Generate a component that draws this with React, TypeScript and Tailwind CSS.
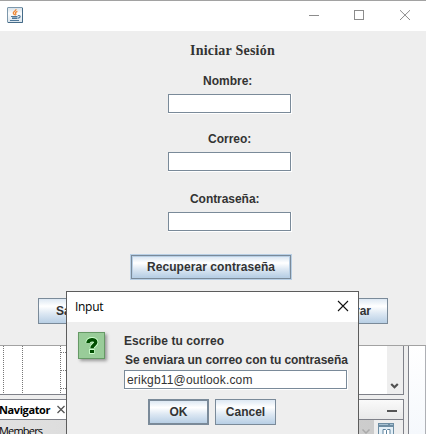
import React from 'react';

const face = "bg-[linear-gradient(to_bottom,#dde8f3_0%,#ffffff_30%,#dde8f3_60%,#b8cfe5_100%)]";
const metal = "font-['Liberation_Sans',Arial,sans-serif] text-[12px] leading-[14px] font-bold text-[#333333] whitespace-nowrap";

function Field({ className = '', children }: { className?: string; children?: React.ReactNode }) {
  return (
    <div className={`border-r border-b border-white ${className}`}>
      <div className="h-full border border-[#7a8a99] bg-white">{children}</div>
    </div>
  );
}

function JavaIcon() {
  return (
    <svg width="16" height="16" viewBox="0 0 16 16" className="ml-[7px] mt-[6px]">
      <defs>
        <linearGradient id="jbg" x1="0" y1="0" x2="0" y2="1">
          <stop offset="0" stopColor="#d5e0e8" />
          <stop offset="0.4" stopColor="#fbfcfd" />
          <stop offset="1" stopColor="#d9e4ec" />
        </linearGradient>
      </defs>
      <rect x="0.5" y="0.5" width="15" height="15" rx="0.5" fill="url(#jbg)" stroke="#7d98ac" />
      <path d="M1 15.5H15.5V1" fill="none" stroke="#456b88" />
      <path d="M9 2.2C9.4 4 6 4.6 6.3 6.2C6.5 7.2 7.4 7.4 7.6 8.2M10.4 4.3C8.4 5.1 8 6 8.8 6.8C9.2 7.4 8.8 7.8 8.3 8.3" fill="none" stroke="#ee8836" strokeWidth="1.3" />
      <path d="M4 9.5H10.5M5 11.5H10.5M3 13.5H12" fill="none" stroke="#4f7899" strokeWidth="1" />
      <path d="M5 10.5H10.5" fill="none" stroke="#8aa7bd" strokeWidth="1" />
      <path d="M10.8 8.7C14 7.9 13.9 10.6 11 11.1" fill="none" stroke="#4f7899" strokeWidth="1.1" />
    </svg>
  );
}

function Workspace() {
  return (
    <div className="h-[88px] flex bg-[#eeeeee] overflow-hidden">
      <div className="w-[404px] flex flex-col">
        <div className="h-[49px] flex border-r border-b border-[#7f8189] bg-white">
          <svg width="387" height="48" viewBox="0 0 387 48" shapeRendering="crispEdges">
            <path d="M3.5 0V48M22.5 0V48M60.5 0V48M61 6.5H75M61 24.5H75M61 42.5H75" stroke="#777" strokeDasharray="1 1" />
          </svg>
          <div className="w-4 bg-[#eeeeee] flex flex-col justify-end">
            <svg width="16" height="16" viewBox="0 0 16 16"><path d="M4.2 6L7.5 9.3L10.8 6" fill="none" stroke="#505050" strokeWidth="2.2" /></svg>
          </div>
        </div>
        <div className="mt-1 h-[21px] flex justify-between border-t border-r border-b border-[#7f8189] bg-linear-to-b from-[#fafafa] to-[#e9e9e9]">
          <div className="w-[75px] flex bg-white">
            <span className="w-[50px] font-['Open_Sans','Noto_Sans',sans-serif] text-[11px] leading-[20px] font-bold text-black tracking-[-0.4px] ml-[-1px] whitespace-nowrap">Navigator</span>
            <svg width="10" height="10" viewBox="0 0 10 10" className="ml-[7px] mt-[5px]"><path d="M1.5 1L8.5 8M8.5 1L1.5 8" stroke="#555" strokeWidth="1.3" /></svg>
          </div>
          <div className="mt-[10px] mr-[6px] h-[2px] w-[10px] bg-[#555]" />
        </div>
        <div className="h-[14px] flex border-r border-[#7f8189] bg-[#eeeeee]">
          <div className="w-[374px] bg-linear-to-r from-[#e1e1e1] to-[#cccccc] flex justify-between">
            <span className="ml-[-1px] font-['Open_Sans','Noto_Sans',sans-serif] text-[11px] leading-[22px] text-black tracking-[-0.8px]">Members</span>
            <svg width="16" height="14" viewBox="0 0 16 14"><path d="M4.5 9.5L8 13L11.5 9.5" fill="none" stroke="#aaa" strokeWidth="1.5" /></svg>
          </div>
          <svg width="16" height="12" viewBox="0 0 16 12" className="ml-1 mt-[3px]">
            <path d="M0 0H16V12H0Z" fill="#6d8da3" />
            <path d="M1 4H15V12H1Z" fill="#e3eff7" />
            <path d="M1 1.5H10M12 1.5H15" stroke="#a8c2d3" />
            <path d="M5 12V6.5H7.5L8.5 7.5L9.5 6.5H12V12M8.5 7.5V12" fill="#fff" stroke="#5d829d" />
          </svg>
        </div>
      </div>
      <div className="ml-1 w-[17px] border-l border-[#7f8189] bg-linear-to-b from-white to-[#f5f8fc]" />
      <div className="w-px bg-[#aeb0b5]" />
    </div>
  );
}

function Dialog() {
  return (
    <div className="absolute left-[66px] top-[291px] w-[293px] h-[143px] flex flex-col border-t border-l border-r border-[#5c5c5c] bg-[#eeeeee]">
      <div className="h-[30px] shrink-0 flex justify-between bg-white">
        <span className="ml-[8px] mt-[5px] font-['Open_Sans','Noto_Sans',sans-serif] text-[12px] leading-[20px] text-black tracking-[-0.3px]">Input</span>
        <svg width="12" height="12" viewBox="0 0 12 12" className="mr-[9px] mt-[8px]"><path d="M1 1L11 11M11 1L1 11" stroke="#111" strokeWidth="1.1" /></svg>
      </div>
      <div className="flex">
        <div className="ml-[11px] mt-[10px] size-[27px] shrink-0 border border-[#669966] bg-[#99cc99] shadow-[2px_2px_3px_#999]">
          <svg width="25" height="25" viewBox="0 0 25 25">
            <path d="M9 9.7C9.1 5.6 16.8 5.6 16.8 9.3C16.8 12 13 11.8 13 15.3M10.2 18.5H15.5" fill="none" stroke="#ccffcc" strokeWidth="5.2" />
            <path d="M9 10C9.1 5.8 16.8 5.6 16.8 9.3C16.8 12 13 11.8 13 15.3" fill="none" stroke="#004d00" strokeWidth="3.4" />
            <path d="M11 18.5H15" stroke="#004d00" strokeWidth="3" />
          </svg>
        </div>
        <div className="ml-[19px] mt-[12px] flex flex-col">
          <span className={`${metal} tracking-[0.09px]`}>Escribe tu correo</span>
          <span className={`${metal} mt-[5px] ml-px tracking-[-0.07px]`}>Se enviara un correo con tu contraseña</span>
          <Field className="mt-[3px] h-[20px] w-[224px]">
            <span className="block ml-[2px] mt-[2px] font-['Liberation_Sans',Arial,sans-serif] text-[12px] leading-[14px] text-[#333] tracking-[0.18px]">erikgb11@outlook.com</span>
          </Field>
        </div>
      </div>
      <div className="mt-[9px] ml-[81px] flex gap-[6px]">
        <div className={`${metal} ${face} w-[61px] h-[26px] flex items-center justify-center border-2 border-[#7a8a99]`}>OK</div>
        <div className={`${metal} ${face} w-[61px] h-[26px] flex items-center justify-center border border-[#7a8a99]`}>Cancel</div>
      </div>
    </div>
  );
}

export default function App() {
  return (
    <div className="relative w-[426px] h-[434px] overflow-hidden bg-[#eeeeee]">
      <div className="h-[346px] flex flex-col border-t border-b border-[#a2a2a2]">
        <div className="h-[30px] shrink-0 bg-white flex justify-between">
          <JavaIcon />
          <svg width="118" height="30" viewBox="0 0 118 30" fill="none" stroke="#8c8c8c">
            <path d="M1 14.5H11M46.5 9.5H55.5V18.5H46.5Z" shapeRendering="crispEdges" />
            <path d="M92 9.2L102 19M102 9.2L92 19" />
          </svg>
        </div>
        <div className="ml-[130px] w-[162px] flex flex-col items-start">
          <h1 className="mt-[11px] ml-[60px] font-['Liberation_Serif','Times_New_Roman',serif] text-[14px] leading-[18px] font-bold text-[#333] whitespace-nowrap tracking-[0.22px]">Iniciar Sesión</h1>
          <span className={`${metal} ml-[73px] mt-[14px]`}>Nombre:</span>
          <Field className="mt-[6px] h-[20px] w-[124px] ml-[38px]" />
          <span className={`${metal} ml-[78px] mt-[18px]`}>Correo:</span>
          <Field className="mt-[6px] h-[20px] w-[124px] ml-[38px]" />
          <span className={`${metal} ml-[60px] mt-[20px] tracking-[-0.05px]`}>Contraseña:</span>
          <Field className="mt-[6px] h-[20px] w-[124px] ml-[38px]" />
          <div className="mt-[22px] w-[162px] h-[26px] border border-[#b8cfe5]">
            <div className="h-full border border-[#7a8a99]">
              <div className={`${metal} ${face} h-full flex items-center justify-center border border-[#b8cfe5] tracking-[0.07px]`}>Recuperar contraseña</div>
            </div>
          </div>
        </div>
        <div className="mt-[18px] ml-[38px] w-[350px] flex justify-between">
          <div className={`${metal} ${face} w-[76px] h-[26px] pl-[17px] flex items-center border border-[#7a8a99]`}>Salir</div>
          <div className={`${metal} ${face} w-[92px] h-[26px] pr-[16px] flex items-center justify-end border border-[#7a8a99]`}>Registrar</div>
        </div>
      </div>
      <Workspace />
      <Dialog />
    </div>
  );
}
